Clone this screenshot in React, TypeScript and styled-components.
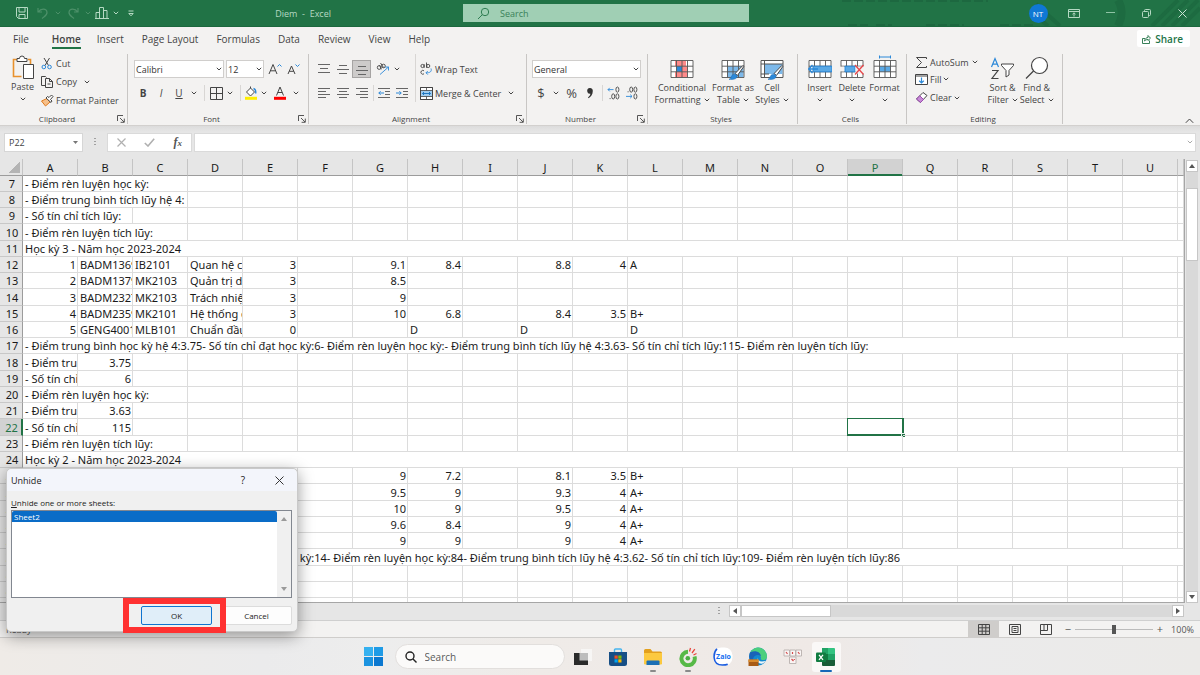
import React from "react";
import styled, { createGlobalStyle, css } from "styled-components";

const ui = `"Open Sans", "Noto Sans", sans-serif`;
const sheetFont = `"Noto Sans", "Open Sans", sans-serif`;
const green = "#217346";
const ink = "#444";
const blue = "#2b88d8";

const GlobalStyle = createGlobalStyle`
  *, *::before, *::after { box-sizing: border-box; }
  body { margin: 0; font-family: ${ui}; font-size: 9px; color: ${ink}; }
  button, select, input { font: inherit; color: inherit; }
  button { border: 0; background: none; padding: 0; margin: 0; }
`;

const Window = styled.div`
  display: flex;
  flex-direction: column;
  height: 100vh;
  overflow: hidden;
  background: #e6e6e6;
`;

/* ---------- Title bar ---------- */

const TitleBar = styled.header`
  position: relative;
  flex: 0 0 27px;
  display: grid;
  grid-template-columns: 463fr 286px 451fr;
  align-items: center;
  background: ${green};
  color: #b5d9c3;
  border-bottom: 1px solid #1c683e;
`;

const TitlePattern = styled.svg`
  position: absolute;
  right: 0;
  top: 0;
  height: 26px;
  width: 400px;
`;

const QuickBar = styled.div`
  display: flex;
  align-items: center;
  padding: 0 132px 0 13px;
`;

const DocTitle = styled.h1`
  margin: 0 0 0 auto;
  font-size: 9px;
  font-weight: 400;
  white-space: pre;
`;

const TitleSearch = styled.label`
  position: relative;
  display: flex;
  align-items: center;
  gap: 10px;
  height: 18px;
  padding-left: 14px;
  background: #a0cfb4;
  color: #2f7d52;
  input {
    flex: 1;
    min-width: 0;
    border: 0;
    padding: 0;
    outline: 0;
    background: transparent;
    font-size: 9px;
  }
  input::placeholder { color: #3a8259; opacity: 1; }
`;

const WindowControls = styled.div`
  position: relative;
  display: flex;
  justify-content: flex-end;
`;

const ControlButton = styled.button`
  width: 36px;
  height: 26px;
  display: grid;
  place-items: center;
`;

const Avatar = styled.span`
  width: 19px;
  height: 19px;
  border-radius: 50%;
  background: #0f78d4;
  color: #fff;
  font-size: 8px;
  line-height: 19px;
`;

/* ---------- Ribbon ---------- */

const TabRow = styled.nav`
  flex: 0 0 25px;
  display: flex;
  align-items: center;
  padding: 0 10px 2px 4px;
  background: #f3f2f1;
`;

const Tab = styled.button<{ $active?: boolean }>`
  position: relative;
  height: 23px;
  padding: 0 9px;
  font-size: 10px;
  ${(p) =>
    p.$active &&
    css`
      font-weight: 600;
      margin: 0 -2px 0 5px;
      &::after {
        content: "";
        position: absolute;
        left: 9px;
        right: 9px;
        bottom: 1px;
        height: 2px;
        background: ${green};
      }
    `}
`;

const ShareButton = styled.button`
  margin-left: auto;
  display: flex;
  align-items: center;
  gap: 4px;
  height: 17px;
  padding: 0 7px 0 5px;
  background: #fff;
  border-radius: 2px;
  color: ${green};
  font-weight: 600;
  font-size: 10px;
`;

const Ribbon = styled.div`
  flex: 0 0 73px;
  display: flex;
  background: #f3f2f1;
`;

const Group = styled.section<{ $w: number }>`
  flex: 0 0 ${(p) => p.$w}px;
  display: flex;
  flex-direction: column;
  position: relative;
  &::after {
    content: "";
    position: absolute;
    right: 0;
    top: 2px;
    bottom: 1px;
    width: 1px;
    background: #c8c6c4;
  }
`;

const GroupBody = styled.div<{ $pad?: number }>`
  flex: 1;
  min-height: 0;
  display: flex;
  padding: 2px 0 0 ${(p) => p.$pad ?? 6}px;
`;

const GroupFooter = styled.div<{ $inset: number }>`
  position: relative;
  flex: none;
  height: 14px;
  text-align: center;
  font-size: 8px;
  line-height: 16px;
  padding-right: ${(p) => p.$inset}px;
`;

const Launcher = styled.button`
  position: absolute;
  right: 3px;
  top: 4px;
  width: 8px;
  height: 8px;
  display: grid;
`;

const Stack = styled.div`
  display: flex;
  flex-direction: column;
`;

const Line = styled.div<{ $h?: number }>`
  display: flex;
  align-items: center;
  height: ${(p) => p.$h ?? 18}px;
`;

const BigButton = styled.button<{ $w: number }>`
  width: ${(p) => p.$w}px;
  display: flex;
  flex-direction: column;
  align-items: center;
  padding-top: 1px;
  line-height: 12px;
  white-space: nowrap;
  > svg { margin-bottom: 1px; }
`;

const Words = styled.span`
  display: flex;
  align-items: center;
  gap: 3px;
  min-height: 12px;
`;

const TextButton = styled.button`
  display: flex;
  align-items: center;
  gap: 2px;
  white-space: nowrap;
`;

const IconButton = styled.button<{ $w?: number; $on?: boolean }>`
  width: ${(p) => p.$w ?? 18}px;
  height: 18px;
  display: grid;
  place-items: center;
  ${(p) => p.$on && css`background: #cdcbca; box-shadow: inset 0 0 0 1px #a6a4a3;`}
`;

const Glyph = styled.span<{ $size?: number; $bold?: boolean; $italic?: boolean; $underline?: boolean }>`
  font-size: ${(p) => p.$size ?? 10}px;
  line-height: 14px;
  font-weight: ${(p) => (p.$bold ? 700 : 400)};
  font-style: ${(p) => (p.$italic ? "italic" : "normal")};
  text-decoration: ${(p) => (p.$underline ? "underline" : "none")};
`;

const Divider = styled.i<{ $w?: number; $tall?: boolean; $blank?: boolean }>`
  width: ${(p) => p.$w ?? 8}px;
  height: ${(p) => (p.$tall ? 48 : 16)}px;
  background: ${(p) => (p.$blank ? "none" : "linear-gradient(#d8d6d4, #d8d6d4) center / 1px 100% no-repeat")};
`;

const Combo = styled.span<{ $w: number }>`
  position: relative;
  width: ${(p) => p.$w}px;
  height: 18px;
  margin-right: 2px;
  select {
    appearance: none;
    width: 100%;
    height: 100%;
    padding: 0 12px 0 1px;
    border: 1px solid #d0cecc;
    border-radius: 0;
    background: #fff;
    color: #333;
  }
  svg { position: absolute; right: 2px; top: 7px; }
`;

const CollapseButton = styled.button`
  margin: auto 6px 1px auto;
  height: 10px;
`;

/* ---------- Formula bar ---------- */

const FormulaRow = styled.div`
  flex: 0 0 34px;
  display: flex;
  align-items: center;
  padding: 0 4px 1px;
  border-top: 1px solid #d2d0ce;
  background: linear-gradient(#dcdcdc, #e6e6e6 6px);
`;

const NameBox = styled.span`
  position: relative;
  flex: 0 0 79px;
  input {
    display: block;
    width: 100%;
    height: 19px;
    padding: 0 4px;
    border: 1px solid #d6d6d6;
    background: #fff;
    font-size: 9px;
  }
  svg { position: absolute; right: 5px; top: 8px; }
`;

const FormulaTools = styled.div`
  flex: 0 0 85px;
  height: 19px;
  display: flex;
  justify-content: space-around;
  align-items: center;
  background: #fff;
  border: 1px solid #dadada;
  margin-right: 2px;
  button { height: 16px; display: grid; place-items: center; }
`;

const Fx = styled.span`
  font: italic 700 12px/14px "Liberation Serif", serif;
  color: #555;
  small { font-size: 9px; }
`;

const FormulaField = styled.span`
  position: relative;
  flex: 1;
  input {
    display: block;
    width: 100%;
    height: 19px;
    border: 1px solid #dadada;
    background: #fff;
  }
  svg { position: absolute; right: 3px; top: 7px; }
`;

/* ---------- Sheet ---------- */

const SheetArea = styled.main`
  flex: 1 1 0;
  min-height: 0;
  display: flex;
`;

const GridClip = styled.div`
  flex: 1;
  min-width: 0;
  overflow: hidden;
  border-right: 1px solid #a6a6a6;
  border-bottom: 1px solid #a6a6a6;
  background: #fff;
`;

const Sheet = styled.table`
  width: 100%;
  table-layout: fixed;
  border-collapse: separate;
  border-spacing: 0;
  font-family: ${sheetFont};
  font-size: 11px;
  line-height: 15px;
  color: #1a1a1a;
  th { padding: 0; font-weight: 400; background: #e6e6e6; }
  tbody tr { height: 16px; }
  tbody tr:nth-child(4n) { height: 17px; }
`;

const ColHead = styled.th<{ $active?: boolean }>`
  height: 17px;
  border-right: 1px solid #c4c4c4;
  border-bottom: 1px solid #9c9c9c;
  ${(p) =>
    p.$active &&
    css`
      && { background: #d2d2d2; }
      color: ${green};
      box-shadow: inset 0 -1px ${green};
      border-bottom-color: ${green};
    `}
`;

const Corner = styled.th`
  border-right: 1px solid #c4c4c4;
  border-bottom: 1px solid #9c9c9c;
  && { background: linear-gradient(135deg, transparent 50%, #b4b4b4 50%) 9px 3px / 11px 11px no-repeat #e6e6e6; }
`;

const RowHead = styled.th<{ $active?: boolean }>`
  border-right: 1px solid #9c9c9c;
  border-bottom: 1px solid #c8c8c8;
  && { padding-left: 2px; }
  ${(p) =>
    p.$active &&
    css`
      && { background: #d2d2d2; }
      color: ${green};
      border-right: 2px solid ${green};
    `}
`;

const Cell = styled.td<{ $num?: boolean; $active?: boolean }>`
  position: relative;
  padding: 0 1px 0 2px;
  border-right: 1px solid #dcdcdc;
  border-bottom: 1px solid #dcdcdc;
  overflow: hidden;
  white-space: nowrap;
  text-align: ${(p) => (p.$num ? "right" : "left")};
  ${(p) =>
    p.$active &&
    css`
      overflow: visible;
      &::before {
        content: "";
        position: absolute;
        inset: -1px;
        right: -2px;
        border: 2px solid ${green};
        border-width: 1px 2px 2px 1px;
      }
      &::after {
        content: "";
        position: absolute;
        right: -3px;
        bottom: -2px;
        width: 4px;
        height: 4px;
        background: ${green};
        border: 1px solid #e8f0eb;
        border-width: 1px 0 0 1px;
      }
    `}
`;

const VScroll = styled.div`
  flex: 0 0 15px;
  display: flex;
  flex-direction: column;
  padding: 1px 1px 0 1px;
`;

const ScrollButton = styled.button`
  flex: 0 0 12px;
  width: 12px;
  height: 12px;
  display: grid;
  place-items: center;
  background: #fff;
  border: 1px solid #c6c6c6;
`;

const VTrack = styled.div`
  flex: 1;
  width: 12px;
  padding-top: 16px;
  background: #d9d9d9;
`;

const VThumb = styled.div`
  height: 73px;
  background: #fff;
  border: 1px solid #c6c6c6;
`;

const HScroll = styled.div`
  flex: 0 0 18px;
  display: flex;
  align-items: center;
  padding: 0 16px 1px 718px;
  border-bottom: 1px solid #cfcfcf;
`;

const HTrack = styled.div`
  flex: 1;
  height: 12px;
  background: #d9d9d9;
`;

const HThumb = styled.div`
  width: 90px;
  height: 12px;
  background: #fff;
  border: 1px solid #c6c6c6;
`;

const Grip = styled.i<{ $before?: number; $after?: number }>`
  flex: none;
  width: 2px;
  height: 9px;
  margin: 0 ${(p) => p.$after ?? 9}px 0 ${(p) => p.$before ?? 0}px;
  background: repeating-linear-gradient(#a0a0a0 0 1px, transparent 1px 3px);
`;

/* ---------- Status bar ---------- */

const StatusBar = styled.footer`
  flex: 0 0 17px;
  display: flex;
  align-items: center;
  background: #f3f2f1;
  border-bottom: 1px solid #cfcdcb;
  padding: 0 6px;
  color: #555;
`;

const Ready = styled.span`
  margin-right: auto;
`;

const ViewButton = styled.button<{ $on?: boolean }>`
  width: 31px;
  height: 16px;
  display: grid;
  place-items: center;
  ${(p) => p.$on && css`background: #cfcdcb;`}
`;

const ZoomButton = styled.button`
  width: 14px;
  font-size: 11px;
  line-height: 14px;
`;

const ZoomRange = styled.input`
  appearance: none;
  width: 78px;
  height: 12px;
  margin: 0;
  background: linear-gradient(#bbb, #bbb) center / 100% 1px no-repeat;
  &::-webkit-slider-thumb {
    appearance: none;
    width: 4px;
    height: 9px;
    background: #555;
  }
`;

const ZoomValue = styled.span`
  width: 27px;
  text-align: right;
`;

/* ---------- Taskbar ---------- */

const Taskbar = styled.div`
  flex: 0 0 37px;
  display: flex;
  align-items: center;
  justify-content: center;
  padding-left: 5px;
  background: linear-gradient(90deg, #efebe7, #ebebec 22%, #ededed 32%, #efebe8 45%, #efe9e6 68%, #ebebec 77%, #ebeae8);
`;

const TaskSearch = styled.label`
  width: 170px;
  height: 25px;
  margin: 0 1px 0 11px;
  padding: 0 10px 0 9px;
  display: flex;
  align-items: center;
  gap: 8px;
  background: #fbfaf9;
  border: 1px solid #e2dfdd;
  border-radius: 13px;
  input {
    flex: 1;
    min-width: 0;
    padding: 0;
    border: 0;
    outline: 0;
    background: transparent;
    font-size: 10px;
  }
  input::placeholder { color: #5a5a5a; opacity: 1; }
`;

const TaskButton = styled.button<{ $w?: number; $mark?: string; $markW?: number; $on?: boolean }>`
  position: relative;
  width: ${(p) => p.$w ?? 35}px;
  height: 30px;
  display: grid;
  place-items: center;
  ${(p) =>
    p.$on &&
    css`
      width: 29px;
      margin: 0 1px;
      background: #faf8f7;
      border-radius: 3px;
    `}
  ${(p) =>
    p.$mark &&
    css`
      &::after {
        content: "";
        position: absolute;
        left: 50%;
        bottom: 0;
        width: ${p.$markW}px;
        height: 2px;
        margin-left: -${(p.$markW ?? 0) / 2}px;
        border-radius: 1px;
        background: ${p.$mark};
      }
    `}
`;

/* ---------- Dialog ---------- */

const Dialog = styled.section`
  position: absolute;
  left: 6px;
  bottom: 43px;
  width: 292px;
  height: 164px;
  display: flex;
  flex-direction: column;
  background: #f0f0f0;
  border: 1px solid #c9c9c9;
  border-radius: 5px;
  box-shadow: 0 4px 16px rgba(0, 0, 0, 0.4);
  color: #222;
  font-size: 8px;
`;

const DialogTitle = styled.div`
  flex: 0 0 22px;
  display: flex;
  align-items: center;
  padding-left: 4px;
  background: #f3f5fb;
  border-radius: 5px 5px 0 0;
  h2 { margin: 0 auto 0 0; font-size: 9px; font-weight: 400; }
  button { width: 36px; height: 22px; display: grid; place-items: center; font-size: 10px; }
`;

const DialogBody = styled.div`
  flex: 1;
  display: flex;
  flex-direction: column;
  padding: 6px 5px 6px 4px;
  > label { line-height: 11px; margin: 0 0 2px; }
`;

const ListFrame = styled.div`
  height: 88px;
  display: flex;
  border: 1px solid #828790;
  background: #fff;
  select {
    flex: 1;
    height: 86px;
    padding: 0;
    border: 0;
    outline: 0;
    overflow: hidden;
    background: #fff;
    font-size: 8px;
  }
  option { min-height: 0; height: 11px; line-height: 11px; padding: 0 2px; }
  option:checked { background: linear-gradient(#0a6cc7, #0a6cc7); color: #fff; }
`;

const ListScroll = styled.div`
  width: 14px;
  display: flex;
  flex-direction: column;
  justify-content: space-between;
  align-items: center;
  padding: 5px 0;
  background: #f0f0f0;
`;

const DialogActions = styled.div`
  display: flex;
  justify-content: flex-end;
  gap: 9px;
  margin-top: 8px;
`;

const PushButton = styled.button<{ $primary?: boolean }>`
  width: 71px;
  height: 19px;
  border-radius: 2px;
  background: ${(p) => (p.$primary ? "#e0eef9" : "#fdfdfd")};
  border: 1px solid ${(p) => (p.$primary ? "#0f74d0" : "#dcdcdc")};
`;

const OkWrap = styled.div`
  position: relative;
  z-index: 1;
  &::after {
    content: "";
    position: absolute;
    left: -18px;
    top: -8px;
    width: 103px;
    height: 35px;
    border: 6px solid #ff3131;
    pointer-events: none;
  }
`;

/* ---------- Icons ---------- */

type IconProps = { w: number; h: number; stroke?: string; sw?: number; children: React.ReactNode };
const Icon = ({ w, h, stroke = ink, sw = 1, children }: IconProps) => (
  <svg width={w} height={h} viewBox={`0 0 ${w} ${h}`} fill="none" stroke={stroke} strokeWidth={sw} aria-hidden="true">
    {children}
  </svg>
);

const Caret = ({ color = ink }: { color?: string }) => (
  <Icon w={6} h={4} stroke={color}>
    <path d="M.8.8 3 3 5.2.8" />
  </Icon>
);

const Arrow = ({ d, color = "#555" }: { d: "up" | "down" | "left" | "right"; color?: string }) => {
  const pts = { up: "0,5 3,1 6,5", down: "0,1 6,1 3,5", left: "5,0 1,3 5,6", right: "1,0 5,3 1,6" }[d];
  return (
    <Icon w={6} h={6} stroke="none">
      <polygon points={pts} fill={color} />
    </Icon>
  );
};

const alignPaths: Record<string, string> = {
  top: "M0 1.5h12M2 5.5h8M0 9.5h12",
  middle: "M2 2.5h8M0 6.5h12M2 10.5h8",
  bottom: "M2 3.5h8M0 7.5h12M2 11.5h8",
  left: "M0 1.5h12M0 4.5h8M0 7.5h12M0 10.5h8",
  center: "M0 1.5h12M2 4.5h8M0 7.5h12M2 10.5h8",
  right: "M0 1.5h12M4 4.5h8M0 7.5h12M4 10.5h8",
};
const AlignIcon = ({ kind }: { kind: string }) => (
  <Icon w={12} h={13} stroke="#666">
    <path d={alignPaths[kind]} />
  </Icon>
);

const IndentIcon = ({ out }: { out?: boolean }) => (
  <Icon w={12} h={13} stroke="#666">
    <path d="M0 1.5h12M7 4.5h5M7 7.5h5M0 10.5h12" />
    <path d={out ? "M6 6H.8M2.6 4.2.8 6l1.8 1.8" : "M0 6h5.2M3.4 4.2 5.2 6 3.4 7.8"} stroke={blue} />
  </Icon>
);

const DecimalIcon = ({ more }: { more?: boolean }) => (
  <Icon w={14} h={14} sw={0.9}>
    {more ? (
      <>
        <path d="M6.500 3.600H1M2.800 1.800 1 3.600l1.800 1.800" stroke={blue} />
        <ellipse cx="10.400" cy="3.600" rx="1.500" ry="2.600" />
        <path d="M2.600 12.600h1" />
        <ellipse cx="6.200" cy="10.400" rx="1.500" ry="2.600" />
        <ellipse cx="10.400" cy="10.400" rx="1.500" ry="2.600" />
      </>
    ) : (
      <>
        <path d="M2.600 5.800h1" />
        <ellipse cx="6.200" cy="3.600" rx="1.500" ry="2.600" />
        <ellipse cx="10.400" cy="3.600" rx="1.500" ry="2.600" />
        <path d="M1 10.400h6M5.200 8.600 7 10.400l-1.800 1.800" stroke={blue} />
        <ellipse cx="10.400" cy="10.400" rx="1.500" ry="2.600" />
      </>
    )}
  </Icon>
);

const LauncherIcon = () => (
  <Icon w={8} h={8} sw={0.9}>
    <path d="M.5 6V.5H6M3 3l4 4M7.3 3.6v3.7H3.6" />
  </Icon>
);

const Brush = ({ x = 0, y = 0 }: { x?: number; y?: number }) => (
  <g transform={`translate(${x} ${y})`}>
    <path d="M14.5.8c1-.6 1.6 0 1.1 1L9.5 10.4 7 8.6z" fill="#fff" stroke={ink} />
    <path d="M6.6 9.2c1.6 0 2.8 1.2 2.4 2.8C8.4 14 5 14.8 1 14.3c2-.7 1.8-1.6 2.4-3 .5-1.2 1.7-2.1 3.2-2.1z" fill={blue} stroke="#1f6fb8" strokeWidth=".6" />
  </g>
);

const GridIcon = ({ children, under }: { children?: React.ReactNode; under?: React.ReactNode }) => (
  <Icon w={24} h={26} stroke="#555">
    <path d="M1 5.5h22v17H1z" fill="#fff" stroke="none" />
    {under}
    <path d="M1 5.5h22v17H1zM1 11.2h22M1 16.8h22M6.5 5.5v17M17.5 5.5v17M12 5.5v17" strokeWidth=".9" />
    {children}
  </Icon>
);

const FolderIcon = () => (
  <Icon w={20} h={18} stroke="none">
    <path d="M1 2.500A1.500 1.500 0 0 1 2.500 1h5l2 2.500H17.500A1.500 1.500 0 0 1 19 5v11H1z" fill="#e3a01d" />
    <path d="M1 5h18v10.500a1 1 0 0 1-1 1H2a1 1 0 0 1-1-1z" fill="#fcc93f" />
    <path d="M4.500 12.500h11a1 1 0 0 1 1 1V17h-13v-3.500a1 1 0 0 1 1-1z" fill="#1b6fb5" />
  </Icon>
);

/* ---------- Data ---------- */

type Item = { c: string; v: string; span?: number; num?: boolean };
const letters = "ABCDEFGHIJKLMNOPQRSTU".split("");
const n = (c: string, v: string): Item => ({ c, v, num: true });
const t = (c: string, v: string, span?: number): Item => ({ c, v, span });

const rows: Record<number, Item[]> = {
  7: [t("A", "- Điểm rèn luyện học kỳ:", 3)],
  8: [t("A", "- Điểm trung bình tích lũy hệ 4:", 3)],
  9: [t("A", "- Số tín chỉ tích lũy:", 2)],
  10: [t("A", "- Điểm rèn luyện tích lũy:", 3)],
  11: [t("A", "Học kỳ 3 - Năm học 2023-2024", 22)],
  12: [n("A", "1"), t("B", "BADM1369"), t("C", "IB2101"), t("D", "Quan hệ công chúng"), n("E", "3"), n("G", "9.1"), n("H", "8.4"), n("J", "8.8"), n("K", "4"), t("L", "A")],
  13: [n("A", "2"), t("B", "BADM1379"), t("C", "MK2103"), t("D", "Quản trị dịch vụ"), n("E", "3"), n("G", "8.5")],
  14: [n("A", "3"), t("B", "BADM2327"), t("C", "MK2103"), t("D", "Trách nhiệm xã hội"), n("E", "3"), n("G", "9")],
  15: [n("A", "4"), t("B", "BADM2359"), t("C", "MK2101"), t("D", "Hệ thống quản lý"), n("E", "3"), n("G", "10"), n("H", "6.8"), n("J", "8.4"), n("K", "3.5"), t("L", "B+")],
  16: [n("A", "5"), t("B", "GENG4001"), t("C", "MLB101"), t("D", "Chuẩn đầu ra"), n("E", "0"), t("H", "D"), t("J", "D"), t("L", "D")],
  17: [t("A", "- Điểm trung bình học kỳ hệ 4:3.75- Số tín chỉ đạt học kỳ:6- Điểm rèn luyện học kỳ:- Điểm trung bình tích lũy hệ 4:3.63- Số tín chỉ tích lũy:115- Điểm rèn luyện tích lũy:", 22)],
  18: [t("A", "- Điểm trung bình"), n("B", "3.75")],
  19: [t("A", "- Số tín chỉ đạt"), n("B", "6")],
  20: [t("A", "- Điểm rèn luyện học kỳ:", 3)],
  21: [t("A", "- Điểm trung bình"), n("B", "3.63")],
  22: [t("A", "- Số tín chỉ tích lũy"), n("B", "115")],
  23: [t("A", "- Điểm rèn luyện tích lũy:", 3)],
  24: [t("A", "Học kỳ 2 - Năm học 2023-2024", 22)],
  25: [n("G", "9"), n("H", "7.2"), n("J", "8.1"), n("K", "3.5"), t("L", "B+")],
  26: [n("G", "9.5"), n("H", "9"), n("J", "9.3"), n("K", "4"), t("L", "A+")],
  27: [n("G", "10"), n("H", "9"), n("J", "9.5"), n("K", "4"), t("L", "A+")],
  28: [n("G", "9.6"), n("H", "8.4"), n("J", "9"), n("K", "4"), t("L", "A+")],
  29: [n("G", "9"), n("H", "9"), n("J", "9"), n("K", "4"), t("L", "A+")],
  30: [t("A", "- Điểm trung bình học kỳ hệ 4:3.71- Số tín chỉ đạt học kỳ:14- Điểm rèn luyện học kỳ:84- Điểm trung bình tích lũy hệ 4:3.62- Số tín chỉ tích lũy:109- Điểm rèn luyện tích lũy:86", 22)],
};
const rowNumbers = Array.from({ length: 28 }, (_, i) => i + 7);

const SheetRow = ({ r }: { r: number }) => {
  const items = rows[r] ?? [];
  const cells: React.ReactNode[] = [];
  for (let i = 0; i < 22; ) {
    const item = items.find((x) => x.c === letters[i]);
    const span = item?.span ?? 1;
    cells.push(
      <Cell key={i} colSpan={span} $num={item?.num} $active={r === 22 && letters[i] === "P"}>
        {item?.v}
      </Cell>
    );
    i += span;
  }
  return (
    <tr>
      <RowHead scope="row" $active={r === 22}>{r}</RowHead>
      {cells}
    </tr>
  );
};

const tabs = ["File", "Home", "Insert", "Page Layout", "Formulas", "Data", "Review", "View", "Help"];

/* ---------- Ribbon groups ---------- */

const Footer = ({ label, launch }: { label: string; launch?: boolean }) => (
  <GroupFooter $inset={launch ? 14 : 4}>
    {label}
    {launch && (
      <Launcher aria-label={`${label} settings`}>
        <LauncherIcon />
      </Launcher>
    )}
  </GroupFooter>
);

const DropButton = ({ label, w = 12 }: { label: string; w?: number }) => (
  <IconButton $w={w} aria-label={label}>
    <Caret />
  </IconButton>
);

const ClipboardGroup = () => (
  <Group $w={128}>
    <GroupBody $pad={5}>
      <BigButton $w={35}>
        <Icon w={24} h={25}>
          <path d="M6 4.500H2.500v17h8M17 4.500h2.500V9" stroke="#e8912d" strokeWidth="1.600" />
          <path d="M6 3.500h2.500a2.500 2.500 0 0 1 5 0H16v3H6z" fill="#fff" />
          <path d="M12.500 9.500h10v14h-10z" fill="#fff" />
        </Icon>
        Paste
        <Words><Caret /></Words>
      </BigButton>
      <Stack>
        <Line>
          <TextButton>
            <Icon w={14} h={13}>
              <path d="M4 1l4.500 7.500M9.500 1 5 8.500" />
              <circle cx="3.800" cy="10" r="1.800" stroke={blue} />
              <circle cx="9.500" cy="10" r="1.800" stroke={blue} />
            </Icon>
            Cut
          </TextButton>
        </Line>
        <Line $h={19}>
          <TextButton>
            <Icon w={14} h={13}>
              <path d="M5 10.500H1.500v-9h4l1 1M5.500 3.500h4l3 3v6h-7zM9.500 3.500v3h3M7.500 9h3" />
            </Icon>
            Copy
          </TextButton>
          <DropButton label="Copy options" w={20} />
        </Line>
        <Line>
          <TextButton>
            <Icon w={14} h={13}>
              <path d="M7 4.500 1.500 7l4 5 4.500-4z" fill="#f6c08a" stroke="#e07b1f" />
              <path d="M6 4l5 4.500 1-1.500-1.500-1.500L13 2.500 11.500 1 9 3.500 7.500 2.500z" fill="#fff" />
            </Icon>
            Format Painter
          </TextButton>
        </Line>
      </Stack>
    </GroupBody>
    <Footer label="Clipboard" launch />
  </Group>
);

const FontGroup = () => (
  <Group $w={181}>
    <GroupBody>
      <Stack>
        <Line $h={30}>
          <Combo $w={90}>
            <select aria-label="Font name"><option>Calibri</option></select>
            <Caret />
          </Combo>
          <Combo $w={38}>
            <select aria-label="Font size"><option>12</option></select>
            <Caret />
          </Combo>
          <IconButton aria-label="Increase font size">
            <Icon w={14} h={13}>
              <path d="M1 11 5 1.500 9 11M2.500 7.800h5" />
              <path d="M9.500 3.500 11.500 1.500l2 2" stroke={blue} />
            </Icon>
          </IconButton>
          <IconButton aria-label="Decrease font size">
            <Icon w={14} h={13}>
              <path d="M2 11 5.500 3 9 11M3.200 8.300h4.600" />
              <path d="M9.500 1.500 11.500 3.500l2-2" stroke={blue} />
            </Icon>
          </IconButton>
        </Line>
        <Line>
          <IconButton aria-label="Bold"><Glyph $bold>B</Glyph></IconButton>
          <IconButton aria-label="Italic"><Glyph $italic>I</Glyph></IconButton>
          <IconButton aria-label="Underline"><Glyph $underline>U</Glyph></IconButton>
          <DropButton label="Underline options" />
          <Divider />
          <IconButton $w={16} aria-label="Borders">
            <Icon w={13} h={13}>
              <path d="M.5.500h12v12H.5zM6.500.500v12M.5 6.500h12" />
            </Icon>
          </IconButton>
          <DropButton label="Border options" />
          <Divider />
          <IconButton $w={14} aria-label="Fill color">
            <Icon w={14} h={14}>
              <path d="M2.500 6 6.500 2l4 4-4 4zM6.500 2V.5" fill="#fff" />
              <path d="M9.500 2.500c2 .5 2.500 2.500 2.200 5" stroke={blue} strokeWidth="1.400" />
              <path d="M1 10.800h12v3H1z" fill="#ffee00" stroke="none" />
            </Icon>
          </IconButton>
          <DropButton label="Fill options" />
          <IconButton $w={20} aria-label="Font color">
            <Icon w={14} h={14}>
              <path d="M3.500 9.500 7 1l3.500 8.500M4.800 6.500h4.400" />
              <path d="M1 10.800h12v3H1z" fill="#f00" stroke="none" />
            </Icon>
          </IconButton>
          <DropButton label="Font color options" />
        </Line>
      </Stack>
    </GroupBody>
    <Footer label="Font" launch />
  </Group>
);

const AlignmentGroup = () => (
  <Group $w={218}>
    <GroupBody $pad={5}>
      <Stack>
        <Line $h={30}>
          <IconButton $w={19} aria-label="Top align"><AlignIcon kind="top" /></IconButton>
          <IconButton $w={19} aria-label="Middle align"><AlignIcon kind="middle" /></IconButton>
          <IconButton $w={19} $on aria-label="Bottom align"><AlignIcon kind="bottom" /></IconButton>
          <Divider $w={4} $blank />
          <IconButton $w={16} aria-label="Orientation">
            <Icon w={14} h={14} sw={0.9}>
              <circle cx="3.200" cy="5.500" r="1.900" />
              <path d="M3.500 3.200 5.300 7.300M4.500 1l3 4.500" />
              <circle cx="7.500" cy="4" r="1.800" />
              <path d="M4 12.500 12.500 5M12.500 8.500V5H9" stroke={blue} />
            </Icon>
          </IconButton>
          <DropButton label="Orientation options" />
        </Line>
        <Line>
          <IconButton $w={19} aria-label="Align left"><AlignIcon kind="left" /></IconButton>
          <IconButton $w={19} aria-label="Center"><AlignIcon kind="center" /></IconButton>
          <IconButton $w={19} aria-label="Align right"><AlignIcon kind="right" /></IconButton>
          <Divider $w={4} />
          <IconButton aria-label="Decrease indent"><IndentIcon out /></IconButton>
          <IconButton aria-label="Increase indent"><IndentIcon /></IconButton>
        </Line>
      </Stack>
      <Divider $tall />
      <Stack>
        <Line $h={30}>
          <TextButton>
            <Icon w={14} h={14} sw={0.9}>
              <circle cx="3.500" cy="4" r="1.600" />
              <path d="M5.200 2.200v3.600M7.500.500v5.300" />
              <circle cx="9.200" cy="4" r="1.600" />
              <path d="M5 8.800a1.900 1.900 0 1 0 0 3" />
              <path d="M12 6.500c1 3-1 4.500-5 4.300M8.800 9 7 10.800l1.800 1.800" stroke={blue} />
            </Icon>
            Wrap Text
          </TextButton>
        </Line>
        <Line>
          <TextButton>
            <Icon w={14} h={13}>
              <path d="M1.500.500h12v12h-12z" fill="#fff" />
              <path d="M2 3.500h11v6H2z" fill="#9fcdf1" stroke="none" />
              <path d="M1.500.500h12v12h-12zM1.500 3.500h12M1.500 9.500h12M7.500.500v3M7.500 9.500v3" strokeWidth=".8" />
              <path d="M3.500 6.500h8M5 5 3.500 6.500 5 8M10 5l1.500 1.500L10 8" stroke="#1f77c0" />
            </Icon>
            Merge &amp; Center
          </TextButton>
          <DropButton label="Merge options" w={20} />
        </Line>
      </Stack>
    </GroupBody>
    <Footer label="Alignment" launch />
  </Group>
);

const NumberGroup = () => (
  <Group $w={121}>
    <GroupBody $pad={5}>
      <Stack>
        <Line $h={30}>
          <Combo $w={109}>
            <select aria-label="Number format"><option>General</option></select>
            <Caret />
          </Combo>
        </Line>
        <Line>
          <IconButton aria-label="Accounting format"><Glyph $size={13}>$</Glyph></IconButton>
          <DropButton label="Accounting options" />
          <IconButton $w={19} aria-label="Percent style"><Glyph $size={13}>%</Glyph></IconButton>
          <IconButton aria-label="Comma style">
            <Icon w={8} h={12} stroke="none">
              <path d="M3.800 1a2.800 2.800 0 0 1 3 3c0 3.500-2 6-4.300 7.200l-.5-.8c1.400-1 2.200-2.200 2.400-3.600A2.800 2.800 0 0 1 3.800 1z" fill="#333" />
            </Icon>
          </IconButton>
          <Divider $w={6} />
          <IconButton aria-label="Increase decimal"><DecimalIcon more /></IconButton>
          <IconButton aria-label="Decrease decimal"><DecimalIcon /></IconButton>
        </Line>
      </Stack>
    </GroupBody>
    <Footer label="Number" launch />
  </Group>
);

const StylesGroup = () => (
  <Group $w={150}>
    <GroupBody $pad={5}>
      <BigButton $w={58}>
        <GridIcon
          under={
            <>
              <path d="M5 5.500h11v5.700H5zM5 16.800h12v5.700H5z" fill="#ff8a8a" stroke="none" />
              <path d="M6.500 11.200h5.500v5.600H6.500z" fill={blue} stroke="none" />
              <path d="M12 11.200h5.500v5.600H12z" fill="#ff8a8a" stroke="none" />
            </>
          }
        />
        <span>Conditional</span>
        <Words>Formatting <Caret /></Words>
      </BigButton>
      <BigButton $w={44}>
        <GridIcon under={<path d="M6.500 11.200h16v11h-16z" fill="#7db9ea" stroke="none" />}>
          <Brush x={7} y={10} />
        </GridIcon>
        <span>Format as</span>
        <Words>Table <Caret /></Words>
      </BigButton>
      <BigButton $w={34}>
        <Icon w={24} h={26} stroke="#555">
          <path d="M1 5.500h22v17H1z" fill="#fff" />
          <path d="M4.500 9h18v10h-18z" fill="#7db9ea" stroke="none" />
          <path d="M1 9h22M4.500 5.500v17M1 19h8" />
          <Brush x={7} y={10} />
        </Icon>
        <span>Cell</span>
        <Words>Styles <Caret /></Words>
      </BigButton>
    </GroupBody>
    <Footer label="Styles" />
  </Group>
);

const CellsGroup = () => (
  <Group $w={109}>
    <GroupBody>
      <BigButton $w={31}>
        <GridIcon>
          <path d="M5 11.200h19v5.600H5z" fill="#5aa9e6" stroke={blue} />
          <path d="M10 14H1M4.500 10 .8 14l3.700 4" stroke={blue} strokeWidth="1.400" />
        </GridIcon>
        <span>Insert</span>
        <Words><Caret /></Words>
      </BigButton>
      <BigButton $w={34}>
        <GridIcon>
          <path d="M0 11.600h4v4.800H0z" fill="#f3f2f1" stroke="none" />
          <path d="M5 11.200h10v5.600H5z" fill="#5aa9e6" stroke={blue} />
          <path d="M15.500 11.500h8.500v7h-8.500z" fill="#f3f2f1" stroke="none" />
          <path d="m15 10 8.500 9.500M23.500 10 15 19.500" stroke="#e8464a" strokeWidth="1.300" />
        </GridIcon>
        <span>Delete</span>
        <Words><Caret /></Words>
      </BigButton>
      <BigButton $w={31}>
        <GridIcon under={<path d="M6.500 11.200h11v5.600h-11z" fill="#5aa9e6" stroke="none" />}>
          <path d="M6.500 2h11M6.500.5v3M17.500.5v3" stroke={blue} />
        </GridIcon>
        <span>Format</span>
        <Words><Caret /></Words>
      </BigButton>
    </GroupBody>
    <Footer label="Cells" />
  </Group>
);

const EditingGroup = () => (
  <Group $w={156}>
    <GroupBody $pad={8}>
      <Stack>
        <Line $h={16}>
          <TextButton>
            <Icon w={13} h={13}>
              <path d="M11.500 3V1.500h-10L6.500 6.500l-5 5h10V10" />
            </Icon>
            AutoSum
          </TextButton>
          <DropButton label="AutoSum options" />
        </Line>
        <Line>
          <TextButton>
            <Icon w={13} h={13}>
              <path d="M.5 1.500h12v10H.5z" fill="#fff" />
              <path d="M.5 3h12" />
              <path d="M6.500 4.500v5.500M4.200 7.800 6.500 10l2.300-2.200" stroke={blue} strokeWidth="1.200" />
            </Icon>
            Fill <Caret />
          </TextButton>
        </Line>
        <Line $h={19}>
          <TextButton>
            <Icon w={13} h={13}>
              <path d="M1.500 8 8 1.500 12 4.500 5.500 11.500z" fill="#fff" />
              <path d="m1.500 8 3.300-3.200L8.500 8.500l-3 3z" fill="#c78bd6" stroke="#9b4bb0" />
            </Icon>
            Clear <Caret />
          </TextButton>
        </Line>
      </Stack>
      <Divider $w={5} $blank />
      <BigButton $w={34}>
        <Icon w={26} h={26}>
          <path d="M1.500 12 5 3.500 8.500 12M2.800 9.200h4.400" stroke={blue} strokeWidth="1.200" />
          <path d="M2 15.500h6L2 23.500h6.500" strokeWidth="1.200" />
          <path d="M11.500 9h12v1.500L19 15.500v4.500l-3 2v-6.500L11.500 10.500z" fill="#fff" />
        </Icon>
        <span>Sort &amp;</span>
        <Words>Filter <Caret /></Words>
      </BigButton>
      <BigButton $w={34}>
        <Icon w={26} h={26}>
          <circle cx="15.500" cy="10.500" r="8" fill="#fff" strokeWidth="1.200" />
          <path d="M9.500 16 2 23.500" strokeWidth="1.200" />
        </Icon>
        <span>Find &amp;</span>
        <Words>Select <Caret /></Words>
      </BigButton>
    </GroupBody>
    <Footer label="Editing" />
  </Group>
);

/* ---------- App ---------- */

const pale = "#8fc3a5";

export default function App() {
  return (
    <Window>
      <GlobalStyle />
      <TitleBar>
        <TitlePattern viewBox="0 0 400 26" fill="none" stroke="#1a5e39" aria-hidden="true">
          <path d="M42 1h146M48 25h20M76 25h16M126 25h38M200 25h34" strokeWidth="2" strokeDasharray="9 3" opacity=".5" />
          <path d="M318 0c6 10 4 18 0 26" strokeWidth="8" opacity=".4" />
          <path d="M234 14l14 12M236 4l24 22M352 26l26-26M362 26l26-26M372 26l26-26M382 26l18-18" strokeWidth="4" opacity=".4" />
        </TitlePattern>
        <QuickBar>
          <IconButton aria-label="Save">
            <Icon w={14} h={14} stroke="#b5d9c3">
              <path d="M1.500 1.500h11v11h-9l-2-2zM4 1.500V6h6V1.500M4 12.500V8.500h6v4" />
            </Icon>
          </IconButton>
          <IconButton $w={24} aria-label="Undo">
            <Icon w={14} h={14} stroke="#4c9069" sw={1.2}>
              <path d="M2 2v4h4M2.300 6C5 2 10.500 2.500 11 6s-3 4.500-5 6.500" />
            </Icon>
          </IconButton>
          <Caret color="#4c9069" />
          <IconButton $w={24} aria-label="Redo">
            <Icon w={14} h={14} stroke="#4c9069" sw={1.2}>
              <path d="M12 2v4H8M11.700 6C9 2 3.500 2.500 3 6s3 4.500 5 6.500" />
            </Icon>
          </IconButton>
          <Caret color="#4c9069" />
          <IconButton $w={22} aria-label="Insert chart">
            <Icon w={14} h={14} stroke="#b5d9c3">
              <path d="M1 12.500V6.500h3.500v6M4.500 12.500V1.500h4v11M8.500 12.500v-8H12v8M0 12.500h14" />
            </Icon>
          </IconButton>
          <Caret color="#b5d9c3" />
          <IconButton $w={24} aria-label="Customize toolbar">
            <Icon w={6} h={7} stroke="#b5d9c3">
              <path d="M.5 1h5M.8 3.500 3 5.800 5.200 3.500z" />
            </Icon>
          </IconButton>
          <DocTitle>Diem  -  Excel</DocTitle>
        </QuickBar>
        <TitleSearch>
          <Icon w={13} h={13} stroke="#2f7d52">
            <circle cx="8" cy="5" r="3.700" />
            <path d="M5.300 7.700 1 12" />
          </Icon>
          <input type="search" placeholder="Search" aria-label="Search" />
        </TitleSearch>
        <WindowControls>
          <ControlButton aria-label="Account"><Avatar>NT</Avatar></ControlButton>
          <ControlButton aria-label="Ribbon display options">
            <Icon w={12} h={10} stroke="#b5d9c3">
              <path d="M.5 1.500h11v8H.5zM.5 3.500h11M6 8.500V5M4.500 6.200 6 4.800l1.500 1.400" />
            </Icon>
          </ControlButton>
          <ControlButton aria-label="Minimize">
            <Icon w={9} h={2} stroke={pale}><path d="M0 .500h9" /></Icon>
          </ControlButton>
          <ControlButton aria-label="Restore">
            <Icon w={9} h={9} stroke="#b5d9c3">
              <rect x=".5" y="2.500" width="6" height="6" rx="1" />
              <path d="M2.500 2.500V1.500a1 1 0 0 1 1-1h4a1 1 0 0 1 1 1v4a1 1 0 0 1-1 1h-1" />
            </Icon>
          </ControlButton>
          <ControlButton aria-label="Close">
            <Icon w={9} h={9} stroke="#c8e3d3"><path d="m.5.500 8 8M8.500.500l-8 8" /></Icon>
          </ControlButton>
        </WindowControls>
      </TitleBar>

      <TabRow>
        {tabs.map((name) => (
          <Tab key={name} $active={name === "Home"}>{name}</Tab>
        ))}
        <ShareButton>
          <Icon w={9} h={10} stroke={green}>
            <path d="M3 4.500H.5v5h7v-3M2.500 7C3 4.500 4.500 3.500 6 3.500V1.500l2.500 2.700L6 6.500v-1C4.500 5.500 3.500 6 2.500 7z" strokeWidth=".9" />
          </Icon>
          Share
        </ShareButton>
      </TabRow>

      <Ribbon>
        <ClipboardGroup />
        <FontGroup />
        <AlignmentGroup />
        <NumberGroup />
        <StylesGroup />
        <CellsGroup />
        <EditingGroup />
        <CollapseButton aria-label="Collapse ribbon">
          <Icon w={9} h={6}><path d="M.8 4.800 4.500 1l3.700 3.800" /></Icon>
        </CollapseButton>
      </Ribbon>

      <FormulaRow>
        <NameBox>
          <input aria-label="Name box" defaultValue="P22" />
          <Icon w={5} h={3} stroke="none"><polygon points="0,0 5,0 2.500,3" fill="#777" /></Icon>
        </NameBox>
        <Grip $before={11} $after={11} />
        <FormulaTools>
          <button aria-label="Cancel entry"><Icon w={9} h={9} stroke="#b0b0b0" sw={1.2}><path d="m.5.500 8 8M8.500.500l-8 8" /></Icon></button>
          <button aria-label="Accept entry"><Icon w={11} h={9} stroke="#b0b0b0" sw={1.6}><path d="M.8 5 4 8 10.200.8" /></Icon></button>
          <button aria-label="Insert function"><Fx>f<small>x</small></Fx></button>
        </FormulaTools>
        <FormulaField>
          <input aria-label="Formula" />
          <Icon w={6} h={4} stroke="#aaa"><path d="M.8.8 3 3 5.200.8" /></Icon>
        </FormulaField>
      </FormulaRow>

      <SheetArea>
        <GridClip>
          <Sheet>
            <colgroup>
              <col width={23} />
              {letters.map((l) => <col key={l} width={55} />)}
              <col />
            </colgroup>
            <thead>
              <tr>
                <Corner aria-label="Select all" />
                {letters.map((l) => <ColHead key={l} scope="col" $active={l === "P"}>{l}</ColHead>)}
                <ColHead aria-label="V" />
              </tr>
            </thead>
            <tbody>
              {rowNumbers.map((r) => <SheetRow key={r} r={r} />)}
            </tbody>
          </Sheet>
        </GridClip>
        <VScroll>
          <ScrollButton aria-label="Scroll up"><Arrow d="up" /></ScrollButton>
          <VTrack><VThumb /></VTrack>
          <ScrollButton aria-label="Scroll down"><Arrow d="down" /></ScrollButton>
        </VScroll>
      </SheetArea>

      <HScroll>
        <Grip />
        <ScrollButton aria-label="Scroll left"><Arrow d="left" /></ScrollButton>
        <HTrack><HThumb /></HTrack>
        <ScrollButton aria-label="Scroll right"><Arrow d="right" /></ScrollButton>
      </HScroll>

      <StatusBar>
        <Ready>Ready</Ready>
        <ViewButton $on aria-label="Normal view">
          <Icon w={12} h={11}><path d="M.5.500h11v10H.5zM4.200.500v10M7.800.500v10M.5 3.800h11M.5 7.200h11" /></Icon>
        </ViewButton>
        <ViewButton aria-label="Page layout view">
          <Icon w={12} h={11}><path d="M.5.500h11v10H.5zM3 2.500h6v6H3zM4.500 4.500h3M4.500 6.500h3" /></Icon>
        </ViewButton>
        <ViewButton aria-label="Page break view">
          <Icon w={12} h={11}><path d="M.5.500h11v10H.5zM.5 6.500h7v-6M4 .5v6" /></Icon>
        </ViewButton>
        <ZoomButton aria-label="Zoom out">−</ZoomButton>
        <ZoomRange type="range" min={0} max={100} defaultValue={50} aria-label="Zoom" />
        <ZoomButton aria-label="Zoom in">+</ZoomButton>
        <ZoomValue>100%</ZoomValue>
      </StatusBar>

      <Taskbar>
        <TaskButton $w={20} aria-label="Start">
          <Icon w={19} h={19} stroke="none">
            <path d="M0 0h9v9H0z" fill="#35b1f0" />
            <path d="M10 0h9v9h-9z" fill="#1f9be6" />
            <path d="M0 10h9v9H0z" fill="#1b93e0" />
            <path d="M10 10h9v9h-9z" fill="#0b78d0" />
          </Icon>
        </TaskButton>
        <TaskSearch>
          <Icon w={12} h={12} stroke="#222" sw={1.4}>
            <circle cx="5" cy="5" r="4" />
            <path d="m8 8 3.500 3.500" />
          </Icon>
          <input type="search" placeholder="Search" aria-label="Search the computer" />
        </TaskSearch>
        <TaskButton aria-label="Task view">
          <Icon w={18} h={16} stroke="none">
            <path d="M7 0h11v12H7z" fill="#f7f6f5" />
            <path d="M0 4h14v12H0z" fill="#2a2a2a" />
            <path d="M5.500 4H14v7.500H5.500z" fill="#bdbdbd" />
          </Icon>
        </TaskButton>
        <TaskButton aria-label="Store">
          <Icon w={18} h={18} stroke="none">
            <path d="M5.500 4V2a1 1 0 0 1 1-1h5a1 1 0 0 1 1 1v2" stroke="#47b5ef" strokeWidth="1.400" />
            <path d="M0 4h18v11.500a2.500 2.500 0 0 1-2.500 2.500h-13A2.500 2.500 0 0 1 0 15.500z" fill="#174f86" />
            <path d="M5.500 7.500h3.200v3.200H5.500z" fill="#f25022" />
            <path d="M9.300 7.500h3.200v3.200H9.300z" fill="#7fba00" />
            <path d="M5.500 11.300h3.200v3.200H5.500z" fill="#00a4ef" />
            <path d="M9.300 11.300h3.200v3.200H9.300z" fill="#ffb900" />
          </Icon>
        </TaskButton>
        <TaskButton $mark="#8a8a8a" $markW={6} aria-label="File Explorer"><FolderIcon /></TaskButton>
        <TaskButton $mark="#8a8a8a" $markW={6} aria-label="Browser">
          <Icon w={18} h={20} stroke="none">
            <path d="M15.500 9.500A6.700 6.700 0 1 1 9 4.800" stroke="#57b947" strokeWidth="4" />
            <circle cx="8.800" cy="11.300" r="2.300" fill="#4aae42" />
            <path d="M10.500 4.500 11.500 1M13 6l2.800-3.800M14.500 8l3-1.500" stroke="#e8453c" strokeWidth="1.300" />
          </Icon>
        </TaskButton>
        <TaskButton aria-label="Zalo">
          <Icon w={20} h={19} stroke="none">
            <rect x=".5" y=".5" width="19" height="18" rx="8" fill="#fff" />
            <path d="M4 1.800C1.500 4 .8 7 1.200 11c.5 5 3.300 7 8 7 2 0 4-.1 5.500-.8" stroke="#1b5de0" strokeWidth="1.600" />
            <text x="10.500" y="12" textAnchor="middle" fontSize="7" fontWeight="700" fill="#1670f0">Zalo</text>
          </Icon>
        </TaskButton>
        <TaskButton aria-label="Edge">
          <Icon w={20} h={20} stroke="none">
            <circle cx="10" cy="9.500" r="9" fill="#1389cf" />
            <path d="M2 5.500A9 9 0 0 1 19 9.500c0 3-2.500 4-5 3.500-1.500-.3-1.500-1-1-2C12.500 7 7.500 4.500 2 5.500z" fill="#4ccf7c" />
            <path d="M2 5.500C7 2.500 13 5 13 9.500c-2-2.500-7-2-8 2.500-.5 2.500.5 5 2 6.100C1.500 17 .3 10 2 5.500z" fill="#1a63b8" />
            <path d="M9.500 9.500c-.5 4 2.500 6 8 4.500-2 3.500-6 3.500-8 .500z" fill="#eef5fa" />
            <path d="M.5 12.500h10v6.500H.5z" fill="#a85a14" />
            <path d="M.5 12.500h10v2.500H.5z" fill="#d98a2b" />
          </Icon>
        </TaskButton>
        <TaskButton aria-label="Keyboard">
          <Icon w={20} h={18} stroke="#b8b0ae" sw={0.9}>
            <path d="M1 2h5.500v6H1zM7 2h5.500v6H7zM13 2h5.500v6H13zM6.500 9h6.500v6.500H6.500z" fill="#faf5f4" />
            <path d="M3 4l1.500 2M9.500 4v2M15 4l1.500 2M8.500 11l2 2M11.300 11v1" stroke="#d34a4a" strokeWidth="1.200" />
          </Icon>
        </TaskButton>
        <TaskButton $on $mark="#1668b8" $markW={12} aria-label="Excel">
          <Icon w={20} h={18} stroke="none">
            <path d="M6 0h6v6H6z" fill="#21a366" />
            <path d="M12 0h6a1 1 0 0 1 1 1v5h-7z" fill="#33c481" />
            <path d="M6 6h6v6H6z" fill="#107c41" />
            <path d="M12 6h7v6h-7z" fill="#21a366" />
            <path d="M6 12h13v5a1 1 0 0 1-1 1H7a1 1 0 0 1-1-1z" fill="#185c37" />
            <rect x="0" y="4.500" width="10" height="9.500" rx="1" fill="#107c41" />
            <path d="m3 6.800 4 5M7 6.800l-4 5" stroke="#fff" strokeWidth="1.300" />
          </Icon>
        </TaskButton>
      </Taskbar>

      <Dialog role="dialog" aria-label="Unhide">
        <DialogTitle>
          <h2>Unhide</h2>
          <button aria-label="Help">?</button>
          <button aria-label="Close dialog">
            <Icon w={9} h={9} stroke="#333"><path d="m.5.500 8 8M8.500.500l-8 8" /></Icon>
          </button>
        </DialogTitle>
        <DialogBody>
          <label htmlFor="sheets"><u>U</u>nhide one or more sheets:</label>
          <ListFrame>
            <select id="sheets" multiple defaultValue={["Sheet2"]}>
              <option>Sheet2</option>
            </select>
            <ListScroll>
              <Arrow d="up" color="#9a9a9a" />
              <Arrow d="down" color="#9a9a9a" />
            </ListScroll>
          </ListFrame>
          <DialogActions>
            <OkWrap><PushButton $primary>OK</PushButton></OkWrap>
            <PushButton>Cancel</PushButton>
          </DialogActions>
        </DialogBody>
      </Dialog>
    </Window>
  );
}
